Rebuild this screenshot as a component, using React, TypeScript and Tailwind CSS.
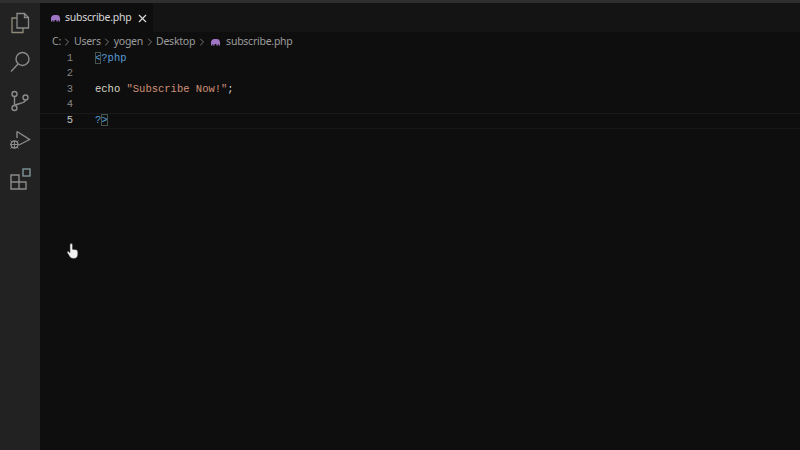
import { ChevronRight, X } from "lucide-react";

function PhpIcon({ className }: { className: string }) {
  return (
    <svg viewBox="0 0 12 10" className={className} fill="#a074c4">
      <path d="M1 5c0-2.500 1.600-4 4-4h2.500C9.800 1 11 2.600 11 5v3.200H9.400V6.600H8.600v1.600H7V6.800H5v1.400H3.400V6.600h-.8v1.600H1z" />
    </svg>
  );
}

function ActivityBar() {
  return (
    <div className="flex w-10 shrink-0 flex-col items-center gap-[15px] bg-[#222222] pt-[8px] text-[#8b8b8b]">
      <svg viewBox="0 0 24 24" className="h-6 w-6" fill="none" stroke="currentColor" strokeWidth="1.300">
        <path d="M9 2.500h7.500l4 4V17H9z" />
        <path d="M16.500 2.500v4h4" />
        <path d="M9 7H4v14.500h11V17" stroke="#8f8a78" />
      </svg>
      <svg viewBox="0 0 24 24" className="h-6 w-6" fill="none" stroke="currentColor" strokeWidth="1.400">
        <circle cx="14.500" cy="9" r="6.500" />
        <path d="M10 14 3 21.500" />
      </svg>
      <svg viewBox="0 0 24 24" className="h-6 w-6" fill="none" stroke="currentColor" strokeWidth="1.400">
        <circle cx="6.500" cy="5" r="2.500" />
        <circle cx="6.500" cy="19" r="2.500" />
        <circle cx="17.500" cy="8.500" r="2.500" />
        <path d="M6.500 7.500v9M17.500 11c0 3.500-7 3-11 5.500" />
      </svg>
      <svg viewBox="0 0 24 24" className="h-6 w-6" fill="none" stroke="currentColor" strokeWidth="1.400">
        <path d="M9 3.500 21.500 11.500 11 17" />
        <path d="M9 3.500V10" />
        <circle cx="6.500" cy="16.500" r="3.500" />
        <path d="M6.500 13v7M2 16.500h9M2.500 12.500l1.500 1.500M10.500 12.500 9 14M2.500 20.500 4 19M10.500 20.500 9 19" strokeWidth="1" />
      </svg>
      <svg viewBox="0 0 24 24" className="h-6 w-6" fill="none" stroke="currentColor" strokeWidth="1.400">
        <path d="M3 8h8v14H3zM3 15h15v7h-7M11 8v7" />
        <rect x="15" y="2" width="7" height="7" stroke="#7f9499" />
      </svg>
    </div>
  );
}

function Crumb({ label }: { label: string }) {
  return (
    <>
      <span>{label}</span>
      <ChevronRight className="mx-[0.500px] h-3 w-3 text-[#9a9a9a]" strokeWidth={1.500} />
    </>
  );
}

function Bracket({ children }: { children: string }) {
  return (
    <span className="text-[#4f9fd6] outline outline-1 -outline-offset-1 outline-[#46544f]">{children}</span>
  );
}

const LINES = [
  <>
    <Bracket>{"<"}</Bracket>
    <span className="text-[#569cd6]">{"?php"}</span>
  </>,
  null,
  <>
    <span className="text-[#d6d6c4]">echo </span>
    <span className="text-[#ce9178]">"Subscribe Now!"</span>
    <span className="text-[#d4d4d4]">;</span>
  </>,
  null,
  <>
    <span className="text-[#569cd6]">?</span>
    <Bracket>{">"}</Bracket>
  </>,
];

export default function App() {
  return (
    <div
      className="relative flex h-[450px] w-[800px] flex-col overflow-hidden bg-[#0e0e0e]"
      style={{ fontFamily: '"Noto Sans", sans-serif' }}
    >
      <div className="h-[3px] shrink-0 bg-[#2f2f2f]" />
      <div className="flex min-h-0 flex-1">
        <ActivityBar />
        <div className="flex min-w-0 flex-1 flex-col">
          <div className="flex h-[29px] shrink-0 bg-[#141414]">
            <div className="flex w-[113px] items-center bg-[#0e0e0e] pt-[1px] pl-[10px] text-[10.500px] text-[#d8d8d8]">
              <PhpIcon className="mr-[4px] h-[9px] w-[11px]" />
              <span className="tracking-[-0.250px]">subscribe.php</span>
              <X className="ml-[5px] h-[13px] w-[13px] text-[#e0e0e0]" strokeWidth={2} />
            </div>
          </div>
          <div className="flex h-[19px] shrink-0 items-center pt-[1px] pl-[12px] text-[10.500px] tracking-[-0.250px] text-[#9c9c9c]">
            <Crumb label="C:" />
            <Crumb label="Users" />
            <Crumb label="yogen" />
            <Crumb label="Desktop" />
            <PhpIcon className="mr-[5px] ml-[2px] h-[9px] w-[11px]" />
            <span>subscribe.php</span>
          </div>
          <div style={{ fontFamily: '"Liberation Mono", monospace' }} className="text-[10.500px] font-medium">
            {LINES.map((line, i) => (
              <div
                key={i}
                className={`flex h-[15.500px] items-center ${i === 4 ? "border-y border-[#191919]" : ""}`}
              >
                <span
                  className={`w-[33px] shrink-0 text-right ${i === 4 ? "text-[#c6c6c6]" : "text-[#858585]"}`}
                >
                  {i + 1}
                </span>
                <span className="ml-[22px] whitespace-pre">{line}</span>
              </div>
            ))}
          </div>
        </div>
      </div>
      <svg viewBox="0 0 16 20" className="absolute top-[242px] left-[66px] h-[18px] w-[14px]" fill="#f2f2f2" stroke="#222" strokeWidth="0.600">
        <path d="M6 1.500c1 0 1.500.6 1.500 1.500v5l3 .4c2 .4 3 1 3 2.600v3c0 2.500-1.500 4.500-4 4.500H8c-2 0-3-1-4-2.500L1.500 12c-.5-1 .5-2 1.500-1.500l1.500 1.500V3c0-1 .5-1.500 1.500-1.500z" />
      </svg>
    </div>
  );
}
